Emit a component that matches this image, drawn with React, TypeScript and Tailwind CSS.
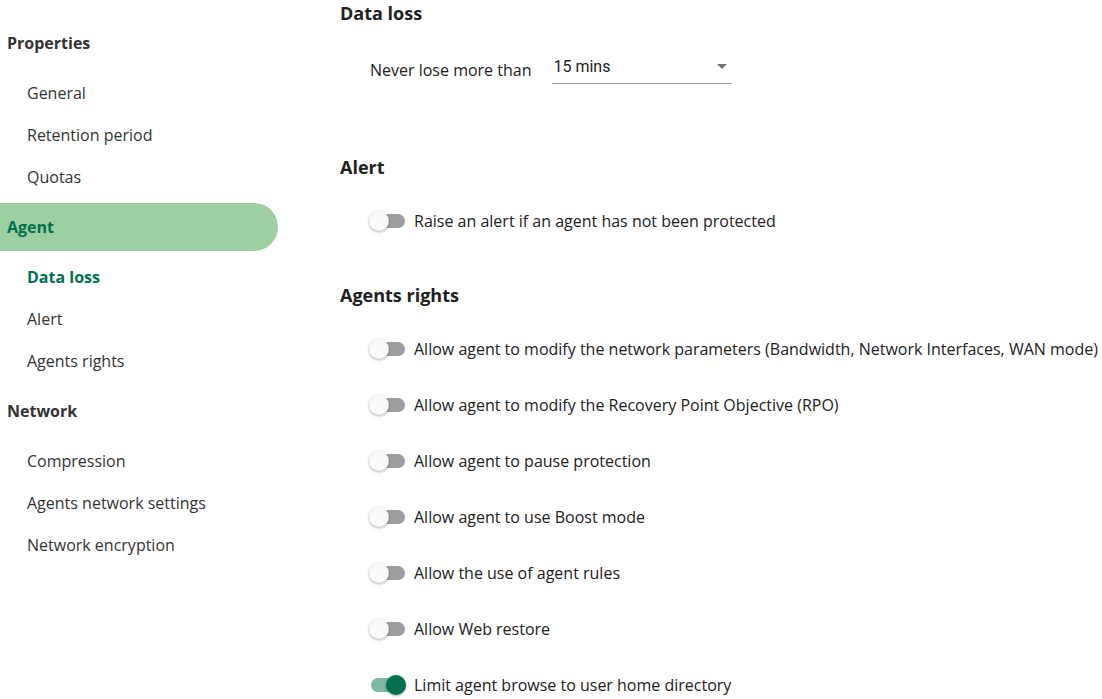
import React from 'react';

const navGroups = [
  { title: 'Properties', items: ['General', 'Retention period', 'Quotas'] },
  { title: 'Agent', items: ['Data loss', 'Alert', 'Agents rights'], active: true },
  { title: 'Network', items: ['Compression', 'Agents network settings', 'Network encryption'] },
];

const rights = [
  { label: 'Allow agent to modify the network parameters (Bandwidth, Network Interfaces, WAN mode)', on: false },
  { label: 'Allow agent to modify the Recovery Point Objective (RPO)', on: false },
  { label: 'Allow agent to pause protection', on: false },
  { label: 'Allow agent to use Boost mode', on: false },
  { label: 'Allow the use of agent rules', on: false },
  { label: 'Allow Web restore', on: false },
  { label: 'Limit agent browse to user home directory', on: true },
];

const Toggle = ({ on }: { on: boolean }) => (
  <div className="relative w-[38px] h-5 shrink-0">
    <div
      className={
        on
          ? 'absolute left-[2px] top-[3px] w-[34px] h-[14px] rounded-full bg-[#7fb8a4]'
          : 'absolute left-[2px] top-[3px] w-[34px] h-[14px] rounded-full bg-[#9e9e9e]'
      }
    />
    <div
      className={
        on
          ? 'absolute left-[17px] top-0 w-5 h-5 rounded-full bg-[#00704f] shadow-[0_1px_3px_rgba(0,0,0,0.35)]'
          : 'absolute left-0 top-0 w-5 h-5 rounded-full bg-[#fafafa] shadow-[0_1px_3px_rgba(0,0,0,0.35)]'
      }
    />
  </div>
);

const ToggleRow = ({ label, on }: { label: string; on: boolean }) => (
  <div className="flex items-center h-14 pl-[29px] gap-[7px]">
    <Toggle on={on} />
    <span className="text-[16px] leading-6 text-[#212121] whitespace-nowrap">{label}</span>
  </div>
);

const Sidebar = () => (
  <aside className="w-[278px] shrink-0 pt-[14px]">
    {navGroups.map((g) => (
      <div key={g.title}>
        <div
          className={
            g.active
              ? 'h-12 my-[5px] flex items-center pl-[7px] rounded-r-full bg-[#9ccfa2] font-bold text-[#00704f]'
              : 'h-12 my-[5px] flex items-center pl-[7px] font-bold text-[#333333]'
          }
        >
          {g.title}
        </div>
        {g.items.map((it) => (
          <div
            key={it}
            className={
              it === 'Data loss'
                ? 'h-[42px] flex items-center pl-[27px] font-bold text-[#00704f]'
                : 'h-[42px] flex items-center pl-[27px] text-[#333333]'
            }
          >
            {it}
          </div>
        ))}
      </div>
    ))}
  </aside>
);

export default function App() {
  return (
    <div
      className="flex w-[1102px] h-[699px] overflow-hidden bg-white text-[16px]"
      style={{ fontFamily: '"Open Sans", sans-serif' }}
    >
      <Sidebar />
      <main className="flex-1 pl-[62px]">
        <section>
          <h2 className="text-[18px] leading-[26px] font-bold text-[#212121]">Data loss</h2>
          <div className="flex items-start pl-[30px] mt-[28px]">
            <span className="mt-[4px] leading-6 text-[#212121]">Never lose more than</span>
            <div className="ml-[21px] w-[180px] h-[30px] border-b border-[#9e9e9e] flex items-start justify-between pl-[1px] pr-[4px]">
              <span className="mt-[1px] leading-6 text-[#212121]" style={{ fontFamily: 'Roboto, sans-serif' }}>
                15 mins
              </span>
              <svg width="10" height="5" viewBox="0 0 10 5" className="mt-[10px] mr-[1px]">
                <path d="M0 0h10L5 5z" fill="#757575" />
              </svg>
            </div>
          </div>
        </section>

        <section className="mt-[70px]">
          <h2 className="text-[18px] leading-[26px] font-bold text-[#212121]">Alert</h2>
          <div className="mt-[13px]">
            <ToggleRow label="Raise an alert if an agent has not been protected" on={false} />
          </div>
        </section>

        <section className="mt-[33px]">
          <h2 className="text-[18px] leading-[26px] font-bold text-[#212121]">Agents rights</h2>
          <div className="mt-[13px]">
            {rights.map((r) => (
              <ToggleRow key={r.label} label={r.label} on={r.on} />
            ))}
          </div>
        </section>
      </main>
    </div>
  );
}
